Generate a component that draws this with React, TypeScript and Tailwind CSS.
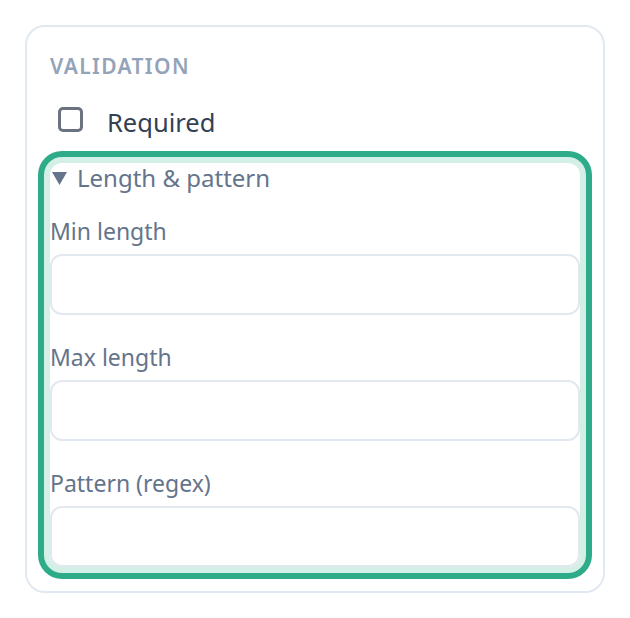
import React from 'react'

const fields = ['Min length', 'Max length', 'Pattern (regex)']

function Field({ label }: { label: string }) {
  return (
    <label className="block">
      <span className="block text-[23px] leading-[30px] text-[#64748b]">{label}</span>
      <input
        type="text"
        className="mt-[8px] block h-[61px] w-full rounded-[12px] border-2 border-[#e2e8f0] bg-white px-3 outline-none"
      />
    </label>
  )
}

export default function App() {
  return (
    <div className="h-[618px] w-[630px] bg-white p-[25px] font-['Noto_Sans',sans-serif]">
      <section className="h-[568px] rounded-[20px] border-2 border-[#e2e8f0] px-[23px] pt-[25px]">
        <h3 className="text-[21px] font-semibold uppercase leading-[28px] tracking-[0.065em] text-[#94a3b8]">
          Validation
        </h3>

        <label className="mt-[25px] flex items-start gap-[24px] pl-[8px]">
          <input
            type="checkbox"
            className="mt-[2px] h-[25px] w-[25px] appearance-none rounded-[5px] border-[3px] border-[#6b7280] bg-white"
          />
          <span className="text-[25.5px] leading-[34px] text-[#334155]">Required</span>
        </label>

        {/* expanded group, focused */}
        <details
          open
          className="mt-[24px] rounded-[12px] bg-white shadow-[0_0_0_6px_#d4efe6,0_0_0_12px_#2eab88]"
        >
          <summary className="flex list-none items-center gap-[10px] pl-[2px] text-[24px] leading-[30px] text-[#64748b] [&::-webkit-details-marker]:hidden">
            <svg width="15" height="13" viewBox="0 0 15 13" className="shrink-0">
              <path d="M0 0h15L7.5 13z" fill="#64748b" />
            </svg>
            Length &amp; pattern
          </summary>
          <div className="mt-[23px] flex flex-col gap-[27px]">
            {fields.map(f => (
              <Field key={f} label={f} />
            ))}
          </div>
        </details>
      </section>
    </div>
  )
}
